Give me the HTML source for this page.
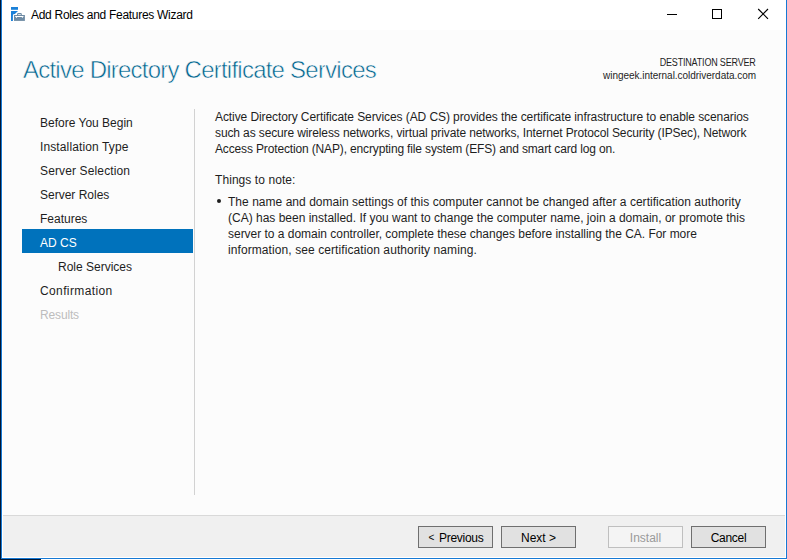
<!DOCTYPE html>
<html><head><meta charset="utf-8">
<style>
html,body{margin:0;padding:0;}
body{width:787px;height:560px;overflow:hidden;position:relative;background:#fff;font-family:"Liberation Sans",sans-serif;color:#000;}
.a{position:absolute;white-space:pre;}
#leftdark{position:absolute;left:0;top:0;width:1px;height:560px;background:#011633;}
#botdark{position:absolute;left:0;top:559px;width:41px;height:1px;background:#011633;}
#win{position:absolute;left:1px;top:0;width:784px;height:558px;border-left:1px solid #1679d4;border-right:1px solid #1679d4;border-bottom:1px solid #1679d4;background:#fff;}
#title{position:absolute;left:2px;top:0;width:784px;height:30px;background:#fff;}
#content{position:absolute;left:3px;top:30px;width:782px;height:485px;background:#fcfcfc;}
#footsep{position:absolute;left:3px;top:515px;width:782px;height:1px;background:#d9d9d9;}
#footer{position:absolute;left:3px;top:516px;width:782px;height:41px;background:#f0f0f0;}
.nav{position:absolute;left:40px;font-size:12px;line-height:24px;color:#1e1e1e;white-space:pre;}
#sel{position:absolute;left:22px;top:229px;width:171px;height:24px;background:#0072bc;}
#vsep{position:absolute;left:194px;top:109px;width:1px;height:386px;background:#d2d2d2;}
.btn{position:absolute;top:526px;width:73px;height:20px;border:1px solid #6f6f6f;background:#e1e1e1;font-size:12px;line-height:22px;text-align:center;color:#000;}
.btn.dis{border-color:#bfbfbf;background:#f4f4f4;color:#9a9a9a;}
.p{position:absolute;left:215px;font-size:12px;line-height:16px;color:#1e1e1e;white-space:pre;}
</style></head><body>
<div id="leftdark"></div>
<div id="botdark"></div>
<div id="win"></div>
<div id="title"></div>
<div id="content"></div>
<div id="footsep"></div>
<div id="footer"></div>

<!-- title bar icon -->
<svg class="a" style="left:0;top:0" width="40" height="30" viewBox="0 0 40 30">
  <rect x="11" y="7" width="7" height="2.8" fill="#1b80d8"/>
  <path d="M11 11 H18 Q15.2 14 12.9 15.4 V21 H11 Z" fill="#1b80d8"/>
  <rect x="13.2" y="14.2" width="12.4" height="7.2" fill="#fff"/>
  <rect x="14" y="15" width="10.9" height="5.9" fill="#6e8ba4"/>
  <rect x="17.6" y="13.6" width="3.7" height="2.2" rx="0.7" fill="none" stroke="#6e8ba4" stroke-width="1.1"/>
  <path d="M15 16 H24 L22.9 17 L22.3 18.2 L21.7 17 H17.1 L16.5 18.2 L15.9 17 L15 16.6 Z" fill="#fff"/>
</svg>
<div class="a" style="left:31px;top:7px;font-size:12px;line-height:16px;letter-spacing:-0.29px;">Add Roles and Features Wizard</div>

<!-- window controls -->
<div class="a" style="left:667px;top:14px;width:10px;height:1px;background:#000;"></div>
<div class="a" style="left:712px;top:9px;width:8px;height:8px;border:1px solid #000;"></div>
<svg class="a" style="left:756px;top:7px" width="15" height="15" viewBox="0 0 15 15"><path d="M2.2 2.0 L12.0 11.8 M12.0 2.0 L2.2 11.8" stroke="#000" stroke-width="1.15"/></svg>

<!-- header -->
<div class="a" style="left:23px;top:55px;font-size:24px;line-height:30px;letter-spacing:-0.77px;color:#00648e;-webkit-text-stroke:0.55px #fcfcfc;">Active Directory Certificate Services</div>
<div class="a" style="right:31px;top:56px;font-size:10px;line-height:13px;letter-spacing:-0.2px;transform:scaleX(0.9);transform-origin:100% 50%;color:#1e1e1e;text-align:right;">DESTINATION SERVER</div>
<div class="a" style="right:31px;top:69px;font-size:10px;line-height:13px;letter-spacing:-0.03px;color:#1e1e1e;text-align:right;">wingeek.internal.coldriverdata.com</div>

<!-- nav -->
<div id="sel"></div>
<div class="nav" style="top:111px;">Before You Begin</div>
<div class="nav" style="top:135px;letter-spacing:0.12px;">Installation Type</div>
<div class="nav" style="top:159px;letter-spacing:0.13px;">Server Selection</div>
<div class="nav" style="top:183px;">Server Roles</div>
<div class="nav" style="top:207px;">Features</div>
<div class="nav" style="top:231px;color:#fff;">AD CS</div>
<div class="nav" style="top:255px;left:58px;">Role Services</div>
<div class="nav" style="top:279px;letter-spacing:0.38px;">Confirmation</div>
<div class="nav" style="top:303px;color:#bdbdbd;letter-spacing:-0.15px;">Results</div>
<div id="vsep"></div>

<!-- content -->
<div class="p" style="top:109px;letter-spacing:-0.087px;">Active Directory Certificate Services (AD CS) provides the certificate infrastructure to enable scenarios</div>
<div class="p" style="top:125px;letter-spacing:-0.118px;">such as secure wireless networks, virtual private networks, Internet Protocol Security (IPSec), Network</div>
<div class="p" style="top:141px;letter-spacing:-0.147px;">Access Protection (NAP), encrypting file system (EFS) and smart card log on.</div>
<div class="p" style="top:172px;letter-spacing:0.07px;">Things to note:</div>
<div class="a" style="left:217px;top:199px;width:4px;height:4px;border-radius:2px;background:#1e1e1e;"></div>
<div class="p" style="top:194px;left:228px;letter-spacing:0.032px;">The name and domain settings of this computer cannot be changed after a certification authority</div>
<div class="p" style="top:210px;left:228px;">(CA) has been installed. If you want to change the computer name, join a domain, or promote this</div>
<div class="p" style="top:226px;left:228px;letter-spacing:-0.023px;">server to a domain controller, complete these changes before installing the CA. For more</div>
<div class="p" style="top:242px;left:228px;letter-spacing:0.085px;">information, see certification authority naming.</div>

<!-- buttons -->
<div class="btn" style="left:418px;"><span style="position:absolute;left:9.5px;top:1px;font-size:10px;line-height:20px;">&lt;</span><span style="position:absolute;left:20px;top:0;letter-spacing:-0.29px;">Previous</span></div>
<div class="btn" style="left:501px;">Next &gt;</div>
<div class="btn dis" style="left:608px;">Install</div>
<div class="btn" style="left:691px;letter-spacing:-0.3px;">Cancel</div>
</body></html>
